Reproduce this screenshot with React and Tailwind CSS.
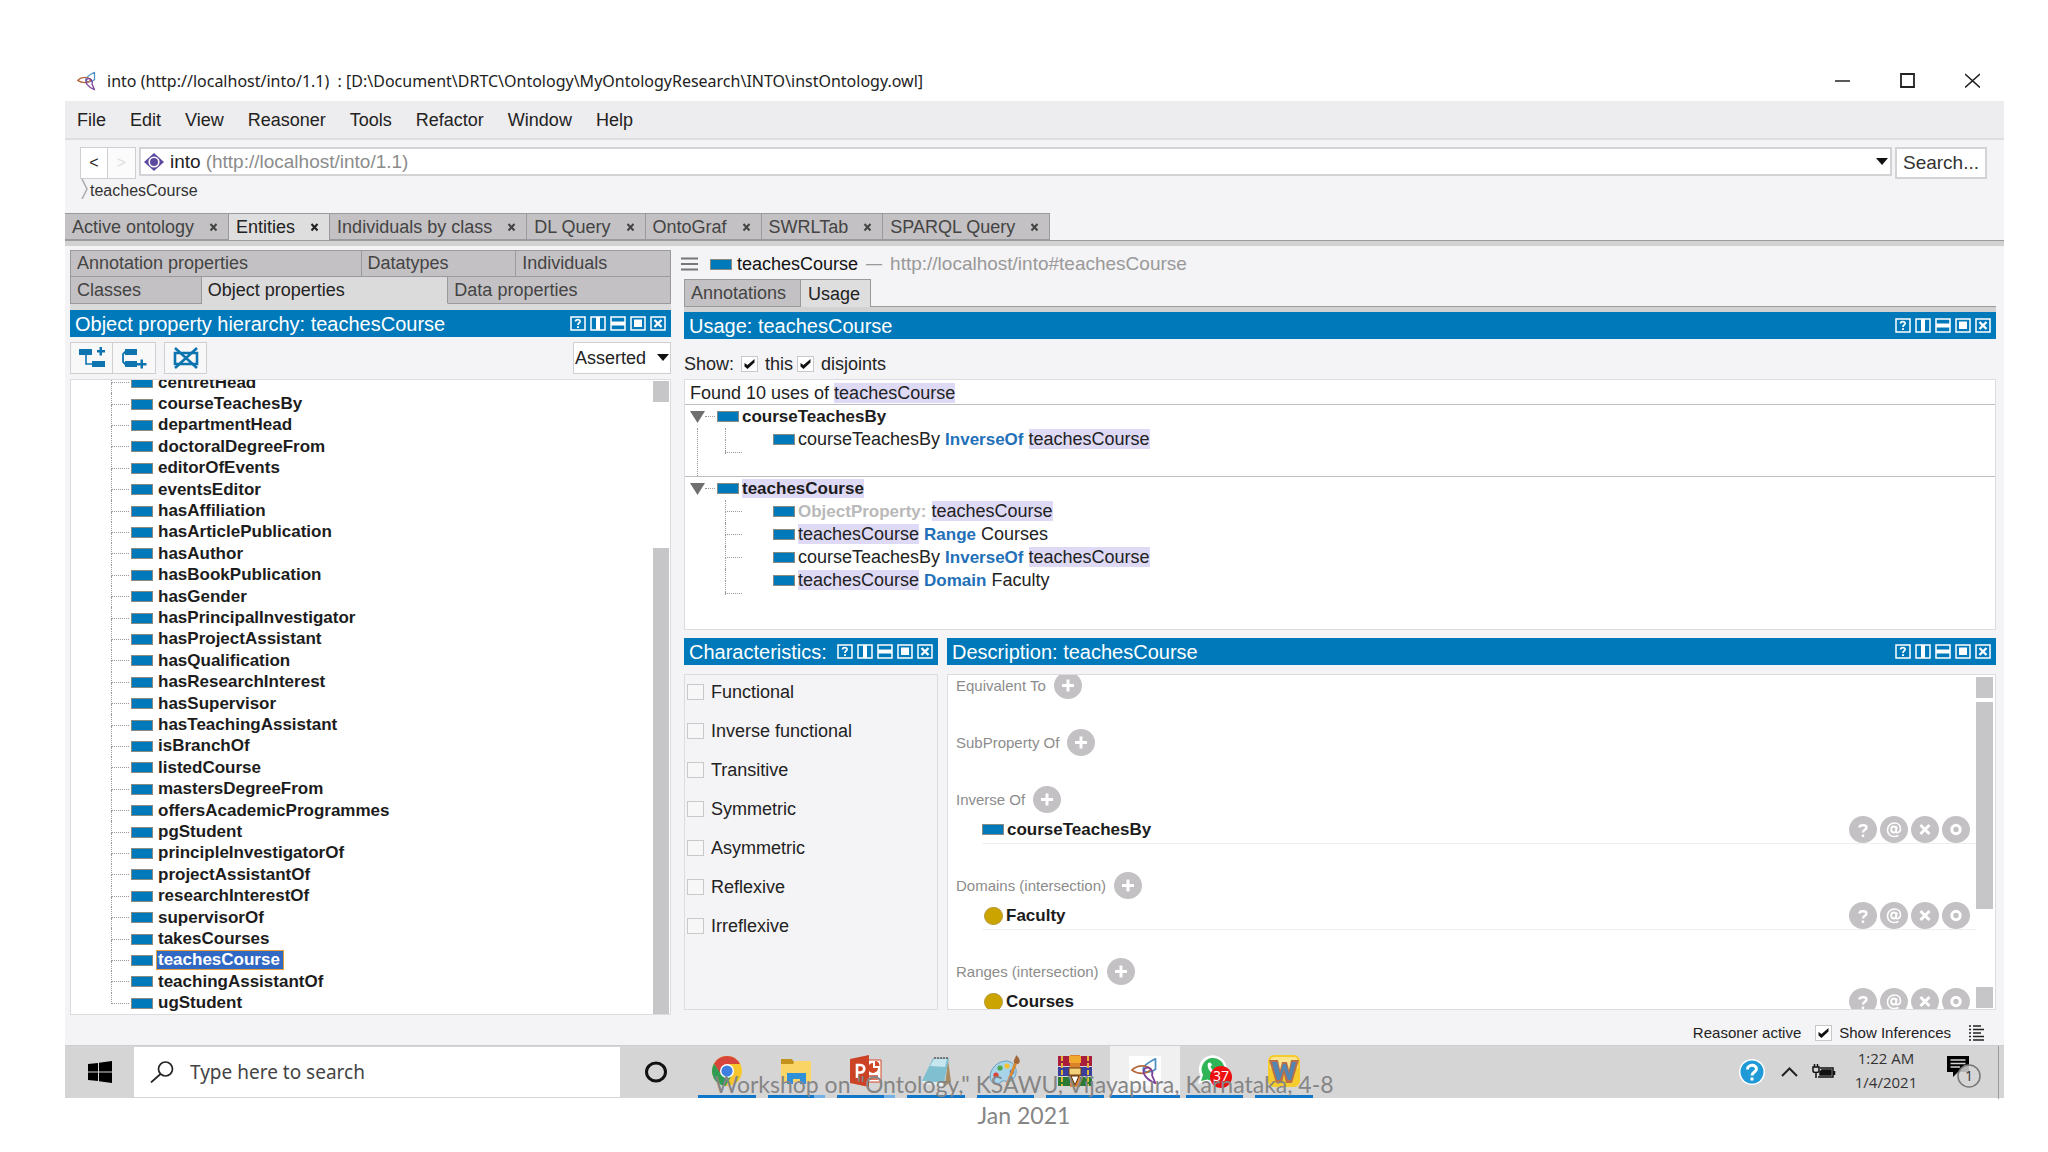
import { useState } from "react";

const menus = ["File", "Edit", "View", "Reasoner", "Tools", "Refactor", "Window", "Help"];

const mainTabs = [
  "Active ontology",
  "Entities",
  "Individuals by class",
  "DL Query",
  "OntoGraf",
  "SWRLTab",
  "SPARQL Query",
];

const properties = [
  "centretHead",
  "courseTeachesBy",
  "departmentHead",
  "doctoralDegreeFrom",
  "editorOfEvents",
  "eventsEditor",
  "hasAffiliation",
  "hasArticlePublication",
  "hasAuthor",
  "hasBookPublication",
  "hasGender",
  "hasPrincipalInvestigator",
  "hasProjectAssistant",
  "hasQualification",
  "hasResearchInterest",
  "hasSupervisor",
  "hasTeachingAssistant",
  "isBranchOf",
  "listedCourse",
  "mastersDegreeFrom",
  "offersAcademicProgrammes",
  "pgStudent",
  "principleInvestigatorOf",
  "projectAssistantOf",
  "researchInterestOf",
  "supervisorOf",
  "takesCourses",
  "teachesCourse",
  "teachingAssistantOf",
  "ugStudent",
];

const characteristics = [
  "Functional",
  "Inverse functional",
  "Transitive",
  "Symmetric",
  "Asymmetric",
  "Reflexive",
  "Irreflexive",
];

const descriptionSections = [
  { label: "Equivalent To" },
  { label: "SubProperty Of" },
  { label: "Inverse Of", item: "courseTeachesBy", kind: "property" },
  { label: "Domains (intersection)", item: "Faculty", kind: "class" },
  { label: "Ranges (intersection)", item: "Courses", kind: "class" },
];

function ProtegeLogo({ className }) {
  return (
    <svg viewBox="0 0 32 32" className={className} fill="none" strokeWidth="2" strokeLinejoin="round">
      <path d="M28 2C20 6 13 11 14 15C17 19 24 17 28 14Z" stroke="#4c8fc4" />
      <path d="M1 15C8 8 18 9 23 14C18 20 8 20 1 15Z" stroke="#b5683c" />
      <path d="M28 30C18 26 11 18 16 13C21 10 26 16 24 21Z" stroke="#7d3f9c" />
    </svg>
  );
}

function PropertyIcon() {
  return <span className="h-[11px] w-[22px] shrink-0 border border-[#8a8a80] bg-[#0079ba]" />;
}

function HeaderIcons() {
  return (
    <div className="flex shrink-0 gap-1 text-white">
      <button type="button" aria-label="Help">
        <svg viewBox="0 0 16 15" className="h-[15px] w-4" fill="none" stroke="currentColor">
          <path d="M1 1H15V14H1Z" strokeWidth="1.5" />
          <path d="M5.5 5.5C5.5 3 10.5 3 10 5.7C9.7 7 8 7 8 9" strokeWidth="1.8" />
          <path d="M7 10.3H9V12H7Z" fill="currentColor" stroke="none" />
        </svg>
      </button>
      <button type="button" aria-label="Split vertically">
        <svg viewBox="0 0 16 15" className="h-[15px] w-4" fill="none" stroke="currentColor">
          <path d="M1 1H15V14H1Z" strokeWidth="1.5" />
          <path d="M8 1V14" strokeWidth="4" />
        </svg>
      </button>
      <button type="button" aria-label="Split horizontally">
        <svg viewBox="0 0 16 15" className="h-[15px] w-4" fill="none" stroke="currentColor">
          <path d="M1 1H15V14H1Z" strokeWidth="1.5" />
          <path d="M1 7.5H15" strokeWidth="4" />
        </svg>
      </button>
      <button type="button" aria-label="Float">
        <svg viewBox="0 0 16 15" className="h-[15px] w-4" fill="none" stroke="currentColor">
          <path d="M1 1H15V14H1Z" strokeWidth="1.5" />
          <path d="M4 3.5H12V11H4Z" fill="currentColor" stroke="none" />
        </svg>
      </button>
      <button type="button" aria-label="Close view">
        <svg viewBox="0 0 16 15" className="h-[15px] w-4" fill="none" stroke="currentColor">
          <path d="M1 1H15V14H1Z" strokeWidth="1.5" />
          <path d="M4.5 4L11.5 11M11.5 4L4.5 11" strokeWidth="2.4" />
        </svg>
      </button>
    </div>
  );
}

function ViewHeader({ title }) {
  return (
    <div className="flex h-[27px] items-center justify-between bg-[#0079ba] pr-[5px] pl-[5px]">
      <h2 className="truncate text-xl leading-[26px] text-white">{title}</h2>
      <HeaderIcons />
    </div>
  );
}

function CheckBox({ id, label, defaultChecked, className }) {
  return (
    <label htmlFor={id} className={`flex items-center ${className}`}>
      <span className="relative flex">
        <input
          id={id}
          type="checkbox"
          defaultChecked={defaultChecked}
          className="peer h-4 w-[17px] appearance-none border border-[#c9c8ca] bg-[#f8f7f8] checked:bg-white"
        />
        <svg
          viewBox="0 0 17 16"
          className="pointer-events-none absolute inset-0 hidden h-4 w-[17px] peer-checked:block"
        >
          <path d="M3.500 7L6.500 9L13.500 3V6.500L6.500 13L3.500 10.500Z" fill="#111" />
        </svg>
      </span>
      {label}
    </label>
  );
}

function MainTabs() {
  return (
    <nav className="flex h-[27px]">
      {mainTabs.map((tab) => {
        const active = tab === "Entities";

        return (
          <div
            key={tab}
            className={`flex items-center gap-[13px] border-t border-r border-[#9a999b] pr-2 pl-[7px] ${
              active ? "bg-[#dfdedf] text-[#222]" : "border-b bg-[#c3c1c3] text-[#444]"
            }`}
          >
            <button type="button" className="text-lg leading-6">
              {tab}
            </button>
            <button type="button" aria-label={`Close ${tab}`} className="flex">
              <svg viewBox="0 0 13 12" className="h-3 w-[13px]" stroke="currentColor" strokeWidth="2">
                <path d="M3.500 3L9.500 9.500M9.500 3L3.500 9.500" />
              </svg>
            </button>
          </div>
        );
      })}
    </nav>
  );
}

function EntityTab({ children, active }) {
  return (
    <button
      type="button"
      className={`truncate border-r border-[#9a999b] pl-[6px] text-left text-lg leading-[25px] ${
        active ? "border-b border-b-[#dcdbdc] bg-[#dcdbdc] text-[#222]" : "border-b bg-[#c3c1c3] text-[#444]"
      }`}
    >
      {children}
    </button>
  );
}

function PropertyTree() {
  const [selected, setSelected] = useState("teachesCourse");

  return (
    <div className="mt-[5px] flex h-[636px] border border-[#dcdbdd] bg-white">
      <div className="flex flex-1 flex-col justify-end overflow-hidden">
        <ul className="grid h-[642px] shrink-0 auto-rows-fr">
          {properties.map((name, index) => (
            <li key={name} className="flex items-center">
              <span className="ml-10 flex w-[18px] flex-col self-stretch">
                <span className="flex-1 border-b border-l border-dotted border-[#999]" />
                <span
                  className={`flex-1 border-dotted border-[#999] ${
                    index < properties.length - 1 ? "border-l" : ""
                  }`}
                />
              </span>
              <span className="ml-[2px] flex">
                <PropertyIcon />
              </span>
              <button
                type="button"
                onClick={() => setSelected(name)}
                className={`ml-[3px] border px-px text-[17px] leading-[18px] font-bold ${
                  name === selected
                    ? "border-[#e2a03a] bg-[#3068c4] pr-[3px] text-white"
                    : "border-transparent text-[#1c1c1c]"
                }`}
              >
                {name}
              </button>
            </li>
          ))}
        </ul>
      </div>
      <div className="flex w-[17px] shrink-0 flex-col justify-between pt-px pr-px">
        <span className="h-[21px] bg-[#c6c5c7]" />
        <span className="h-[466px] bg-[#c6c5c7]" />
      </div>
    </div>
  );
}

function EntityPanel() {
  return (
    <section>
      <div className="grid h-[27px] grid-cols-[291fr_155fr_155fr] border-t border-l border-[#9a999b]">
        <EntityTab>Annotation properties</EntityTab>
        <EntityTab>Datatypes</EntityTab>
        <EntityTab>Individuals</EntityTab>
      </div>
      <div className="grid h-[27px] grid-cols-[131fr_247fr_223fr] border-l border-[#9a999b]">
        <EntityTab>Classes</EntityTab>
        <EntityTab active>Object properties</EntityTab>
        <EntityTab>Data properties</EntityTab>
      </div>
      <div className="h-[6px] bg-[#dcdbdc]" />
      <ViewHeader title="Object property hierarchy: teachesCourse" />
      <div className="mt-[5px] flex h-8">
        <button
          type="button"
          aria-label="Add sub property"
          className="flex w-[43px] items-center justify-center border border-[#cfced0] bg-[#f8f8f8]"
        >
          <svg viewBox="0 0 28 22" className="h-[22px] w-7" fill="#0d74b0">
            <path d="M1 2H14V8H1ZM14 14H27V20H14ZM19 3H21.500V0H24V3H27V5.500H24V8.500H21.500V5.500H19Z" />
            <path d="M8 8V17H14" fill="none" stroke="#0d74b0" strokeWidth="1.6" />
          </svg>
        </button>
        <button
          type="button"
          aria-label="Add sibling property"
          className="flex w-[43px] items-center justify-center border border-l-0 border-[#cfced0] bg-[#f8f8f8]"
        >
          <svg viewBox="0 0 28 22" className="h-[22px] w-7" fill="#0d74b0">
            <path d="M5 2H17V8H5ZM5 14H17V20H5ZM17 16H20.500V12.500H23V16H26.500V18.500H23V21.500H20.500V18.500H17Z" />
            <path d="M6 4L3 7V15L6 18" fill="none" stroke="#0d74b0" strokeWidth="1.8" />
          </svg>
        </button>
        <button
          type="button"
          aria-label="Delete property"
          className="ml-2 flex w-[43px] items-center justify-center border border-[#cfced0] bg-[#f8f8f8]"
        >
          <svg viewBox="0 0 28 24" className="h-6 w-7" fill="none" stroke="#0d74b0" strokeWidth="2.6">
            <path d="M3 7H25V18H3Z" />
            <path d="M3 2L25 22M25 2L3 22" />
          </svg>
        </button>
        <div className="relative ml-auto w-[98px]">
          <select
            aria-label="Hierarchy mode"
            className="h-8 w-full appearance-none border border-[#cfced0] bg-white pl-px text-lg leading-7 text-[#222]"
          >
            <option>Asserted</option>
            <option>Inferred</option>
          </select>
          <svg viewBox="0 0 12 7" className="pointer-events-none absolute top-3 right-[2px] h-[7px] w-3">
            <path d="M0 0H12L6 7Z" fill="#111" />
          </svg>
        </div>
      </div>
      <PropertyTree />
    </section>
  );
}

function Mark({ children }) {
  return <span className="bg-[#dedaf6]">{children}</span>;
}

function Keyword({ children }) {
  return <span className="text-[17px] font-bold text-[#2270b8]">{children}</span>;
}

function UsageHeading({ children }) {
  return (
    <div className="flex h-[23px] items-center pl-[5px]">
      <svg viewBox="0 0 15 12" className="h-3 w-[15px]">
        <path d="M0 0H15L7.500 12Z" fill="#6f6f6f" />
      </svg>
      <span className="mr-[2px] w-[10px] border-b border-dotted border-[#999]" />
      <PropertyIcon />
      <h3 className="ml-[3px] text-[17px] leading-[22px] font-bold text-[#1c1c1c]">{children}</h3>
    </div>
  );
}

function UsageRow({ children, branch = true }) {
  return (
    <li className="flex h-[23px] items-center">
      <span className="ml-10 flex w-[17px] flex-col self-stretch">
        <span className={`flex-1 border-l border-dotted border-[#999] ${branch ? "border-b" : ""}`} />
        <span className="flex-1 border-l border-dotted border-[#999]" />
      </span>
      <span className="ml-[31px] flex">
        <PropertyIcon />
      </span>
      <span className="ml-[3px] text-lg leading-[22px] text-[#222]">{children}</span>
    </li>
  );
}

function UsageEnd() {
  return <li className="ml-10 h-[2px] w-[17px] border-b border-l border-dotted border-[#999]" />;
}

function UsagePanel() {
  return (
    <>
      <ViewHeader title="Usage: teachesCourse" />
      <div className="flex h-10 items-center gap-1 pt-[10px] text-lg leading-6 text-[#222]">
        <span className="mr-[3px]">Show:</span>
        <CheckBox id="show-this" label="this" defaultChecked className="gap-[7px]" />
        <CheckBox id="show-disjoints" label="disjoints" defaultChecked className="gap-[7px]" />
      </div>
      <div className="h-[251px] border border-[#dcdbdd] bg-white">
        <p className="h-[25px] border-b border-[#bdbdbd] pt-px pl-[5px] text-lg leading-[25px] text-[#222]">
          Found 10 uses of <Mark>teachesCourse</Mark>
        </p>
        <div className="flex h-[72px] flex-col border-b border-[#bdbdbd]">
          <UsageHeading>courseTeachesBy</UsageHeading>
          <div className="flex flex-1">
            <span className="ml-3 border-l border-dotted border-[#999]" />
            <ul className="-ml-[13px]">
              <UsageRow branch={false}>
                courseTeachesBy <Keyword>InverseOf</Keyword> <Mark>teachesCourse</Mark>
              </UsageRow>
              <UsageEnd />
            </ul>
          </div>
        </div>
        <UsageHeading>
          <Mark>teachesCourse</Mark>
        </UsageHeading>
        <ul>
          <UsageRow>
            <span className="text-[17px] font-bold text-[#b9b9b9]">ObjectProperty:</span> <Mark>teachesCourse</Mark>
          </UsageRow>
          <UsageRow>
            <Mark>teachesCourse</Mark> <Keyword>Range</Keyword> Courses
          </UsageRow>
          <UsageRow>
            courseTeachesBy <Keyword>InverseOf</Keyword> <Mark>teachesCourse</Mark>
          </UsageRow>
          <UsageRow branch={false}>
            <Mark>teachesCourse</Mark> <Keyword>Domain</Keyword> Faculty
          </UsageRow>
          <UsageEnd />
        </ul>
      </div>
    </>
  );
}

function CircleButton({ label, children }) {
  return (
    <button type="button" aria-label={label} className="shrink-0">
      <svg viewBox="0 0 28 27" className="h-[27px] w-7" fill="none" stroke="#fff" strokeWidth="3">
        <ellipse cx="14" cy="13.500" rx="14" ry="13.500" fill="#c3c1c3" stroke="none" />
        {children}
      </svg>
    </button>
  );
}

function AxiomActions() {
  return (
    <div className="mr-[6px] ml-auto flex gap-[3px]">
      <CircleButton label="Explain">
        <path d="M10.500 11.500C10.500 8.500 17.500 8.500 17.500 11.500C17.500 14 14 13.500 14 16.500M14 18.500V21" strokeWidth="2.400" />
      </CircleButton>
      <CircleButton label="Annotate">
        <path d="M17 10.500L15.800 15.500C15.500 17.500 20.500 17 20.500 13C20.500 9.500 18 7 14.500 7C10.500 7 7.500 10 7.500 14C7.500 18 10.500 20.500 14 20.500C16 20.500 17.500 20 18.500 19.500" strokeWidth="1.600" />
        <ellipse cx="13.800" cy="13.500" rx="2.600" ry="3" strokeWidth="1.800" />
      </CircleButton>
      <CircleButton label="Remove">
        <path d="M9.500 9L18.500 18M18.500 9L9.500 18" />
      </CircleButton>
      <CircleButton label="Edit">
        <circle cx="14" cy="13.500" r="4.200" />
      </CircleButton>
    </div>
  );
}

function DescriptionPanel() {
  return (
    <section>
      <ViewHeader title="Description: teachesCourse" />
      <div className="mt-[9px] flex h-[336px] overflow-hidden border border-[#dcdbdd] bg-white">
        <div className="flex-1">
          <div className="-mt-[3px]">
            {descriptionSections.map((section) => (
              <div key={section.label} className={section.item ? "h-[86px]" : "h-[57px]"}>
                <div className="flex h-[27px] items-center gap-2 pl-2">
                  <h3 className="text-[15px] leading-5 text-[#8c8c8c]">{section.label}</h3>
                  <CircleButton label={`Add ${section.label}`}>
                    <path d="M14 7.500V19.500M8 13.500H20" />
                  </CircleButton>
                </div>
                {section.item && (
                  <div className="mt-[3px] ml-[34px] flex h-7 items-center border-b border-[#efefef]">
                    {section.kind === "property" ? (
                      <PropertyIcon />
                    ) : (
                      <span className="ml-[2px] h-[18px] w-[19px] rounded-full border border-[#b79a3c] bg-[#cca400]" />
                    )}
                    <span className="ml-[3px] text-[17px] leading-[22px] font-bold text-[#1c1c1c]">
                      {section.item}
                    </span>
                    <AxiomActions />
                  </div>
                )}
              </div>
            ))}
          </div>
        </div>
        <div className="flex w-[19px] shrink-0 flex-col pt-[2px] pr-[2px] pb-px">
          <span className="h-[21px] bg-[#c6c5c7]" />
          <span className="mt-1 h-[207px] bg-[#c6c5c7]" />
          <span className="mt-auto h-[21px] bg-[#c6c5c7]" />
        </div>
      </div>
    </section>
  );
}

function DetailPanel() {
  return (
    <section>
      <div className="flex h-7 items-center">
        <button type="button" aria-label="Menu" className="-ml-[3px]">
          <svg viewBox="0 0 17 14" className="h-[14px] w-[17px]" stroke="#777" strokeWidth="2">
            <path d="M0 1.500H17M0 7H17M0 12.500H17" />
          </svg>
        </button>
        <span className="ml-3 flex">
          <PropertyIcon />
        </span>
        <h1 className="ml-[5px] text-lg leading-6 text-[#111]">teachesCourse</h1>
        <span className="mx-2 text-base text-[#999]">—</span>
        <a href="#teachesCourse" className="text-[19px] leading-6 text-[#999]">
          http://localhost/into#teachesCourse
        </a>
      </div>
      <nav className="mt-px flex h-7 border-b border-[#9a999b]">
        <button
          type="button"
          className="w-[117px] border border-b-0 border-[#9a999b] bg-[#c3c1c3] pl-[6px] text-left text-lg leading-[26px] text-[#444]"
        >
          Annotations
        </button>
        <button
          type="button"
          className="-mb-px w-[70px] border-t border-r border-[#9a999b] bg-[#dfdedf] pl-[7px] text-left text-lg leading-[26px] text-[#222]"
        >
          Usage
        </button>
      </nav>
      <div className="h-[5px] bg-[#d3d2d3]" />
      <UsagePanel />
      <div className="mt-2 grid grid-cols-[254fr_1049fr] gap-[9px]">
        <section className="min-w-0">
          <ViewHeader title="Characteristics:" />
          <div className="mt-[9px] flex h-[336px] flex-col gap-[5px] border border-[#dcdbdd] pl-[2px]">
            {characteristics.map((name) => (
              <CheckBox
                key={name}
                id={name}
                label={name}
                className="h-[34px] gap-[7px] text-lg leading-6 text-[#222]"
              />
            ))}
          </div>
        </section>
        <DescriptionPanel />
      </div>
    </section>
  );
}

function ChromeIcon() {
  return (
    <svg viewBox="0 0 32 32" className="h-8 w-8">
      <circle cx="16" cy="16" r="15" fill="#f7c52c" />
      <path d="M16 1A15 15 0 0 0 3 8.500L10 20L16 9H29A15 15 0 0 0 16 1Z" fill="#d8453a" />
      <path d="M3 8.500A15 15 0 0 0 14.500 31L21 20L10.500 20Z" fill="#2f9e52" />
      <circle cx="16" cy="16" r="7" fill="#fff" />
      <circle cx="16" cy="16" r="5.600" fill="#3f7fe0" />
    </svg>
  );
}

function ExplorerIcon() {
  return (
    <svg viewBox="0 0 32 32" className="h-8 w-8">
      <path d="M1 4H12L14 7H29V12H1Z" fill="#c2921d" />
      <path d="M1 9H13L15 6H31V27H1Z" fill="#fbd466" />
      <path d="M7 29V18H26V29H20V24H13V29Z" fill="#2f8fd8" />
    </svg>
  );
}

function PowerPointIcon() {
  return (
    <svg viewBox="0 0 32 32" className="h-8 w-8">
      <path d="M16 5H31V27H16Z" fill="#fff" stroke="#d24726" />
      <path d="M23 8A5 5 0 1 0 28 13H23Z" fill="#d24726" />
      <path d="M25 6V11H29.500C29.500 8 28 6 25 6Z" fill="#d24726" />
      <path d="M19 21H28M19 24H28" stroke="#d24726" strokeWidth="1.500" />
      <path d="M0 4L19 0V32L0 28Z" fill="#cc4224" />
      <path d="M7 23V10H10.500C15.500 10 15.500 17.500 10.500 17.500H7" fill="none" stroke="#fff" strokeWidth="2.600" />
    </svg>
  );
}

function NotepadIcon() {
  return (
    <svg viewBox="0 0 32 32" className="h-8 w-8">
      <path d="M28 4L31 27L25 31Z" fill="#a98b5f" />
      <path d="M13 3H29L24 28L2 26Z" fill="#7fbfd0" />
      <path d="M14 4H27L25 12L10 11Z" fill="#c6e6ee" />
      <path d="M14 3H29" stroke="#777" strokeWidth="2" strokeDasharray="2 1" />
      <path d="M2 26L24 28L22 31L4 29Z" fill="#e9f4f6" />
    </svg>
  );
}

function PaintIcon() {
  return (
    <svg viewBox="0 0 32 32" className="h-8 w-8">
      <path d="M18 6C8 6 1 14 1 22C1 29 9 31 12 27C15 24 17 28 22 26C29 22 30 8 18 6Z" fill="#a8d4ea" stroke="#6a9fbe" />
      <circle cx="7" cy="20" r="2.600" fill="#d94436" />
      <circle cx="11" cy="13" r="2.600" fill="#4fa64b" />
      <circle cx="18" cy="11" r="2.600" fill="#f1c232" />
      <circle cx="23" cy="17" r="2.400" fill="#4a79c9" />
      <path d="M27 7L18 30" stroke="#d98a32" strokeWidth="3" />
      <path d="M25 8C24 4 27 3 27 0C31 3 32 7 29 9Z" fill="#a2683a" />
    </svg>
  );
}

function WinRarIcon() {
  return (
    <svg viewBox="0 0 34 32" className="h-8 w-[34px]">
      <path d="M0 1H34V11H0Z" fill="#a91e3c" />
      <path d="M0 12H34V21H0Z" fill="#3a3f9c" />
      <path d="M0 22H34V31H0Z" fill="#2b7a34" />
      <path d="M4 1V31M30 1V31" stroke="#e0b53b" strokeWidth="2" strokeDasharray="5 2" />
      <path d="M12 0H22V32H12Z" fill="#d9822b" />
      <path d="M11 1H23V8H11Z" fill="#f0a92c" />
      <path d="M11 13H23V20H11Z" fill="#f4d27a" stroke="#6e3d12" />
      <path d="M13 21H21L17 30Z" fill="#fff" stroke="#5a2d0c" />
    </svg>
  );
}

function WhatsAppIcon() {
  return (
    <svg viewBox="0 0 36 36" className="h-9 w-9">
      <path d="M2 31L4.500 23A14 14 0 1 1 10 28.500Z" fill="#fff" />
      <path d="M5 28L7 22A11.500 11.500 0 1 1 11.500 26.500Z" fill="#2fb457" />
      <path d="M12 10C10 16 17 23 22 21L23 18L20 16.500L18.500 18C16 17 15 15 14.500 13.500L16 12L14.500 9.500Z" fill="#fff" />
      <circle cx="25" cy="24" r="11" fill="#ee1111" />
      <text x="25" y="28" textAnchor="middle" fontSize="14" fill="#fff">
        37
      </text>
    </svg>
  );
}

function WordWebIcon() {
  return (
    <svg viewBox="0 0 34 34" className="h-[34px] w-[34px]">
      <rect x="1" y="1" width="32" height="32" rx="6" fill="#f6cb2e" />
      <path d="M3 8C3 4 5 3 8 3H26C30 3 31 5 31 8V14C22 17 12 17 3 14Z" fill="#fbe58d" />
      <path d="M2 6H11L13 16L15 8H20L22 16L24 6H32L25 29H19L17 20L15 29H9Z" fill="#b9704a" />
      <path d="M5 8H10L13 20L16 10H19L22 20L25 8H29L24 26H21L17 15L13 26H10Z" fill="#4f86b5" />
    </svg>
  );
}

const taskbarApps = [
  { name: "Chrome", icon: <ChromeIcon /> },
  { name: "File Explorer", icon: <ExplorerIcon />, stacked: true },
  { name: "PowerPoint", icon: <PowerPointIcon />, stacked: true },
  { name: "Notepad", icon: <NotepadIcon /> },
  { name: "Paint", icon: <PaintIcon /> },
  { name: "WinRAR", icon: <WinRarIcon /> },
  { name: "Protege", icon: <ProtegeLogo className="h-[30px] w-8 bg-white p-px" />, active: true },
  { name: "WhatsApp", icon: <WhatsAppIcon /> },
  { name: "WordWeb", icon: <WordWebIcon /> },
];

function Taskbar() {
  return (
    <footer className="flex h-[53px] border-t border-[#cfcecf] bg-[#d6d5d6] font-['Open_Sans',sans-serif]">
      <button type="button" aria-label="Start" className="flex w-[69px] items-center justify-center">
        <svg viewBox="0 0 24 22" className="h-[22px] w-6" fill="#000">
          <path d="M0 3L10 2V10.500H0ZM11 1.800L24 0V10.500H11ZM0 11.500H10V20L0 19ZM11 11.500H24V22L11 20.200Z" />
        </svg>
      </button>
      <div className="my-px flex w-[486px] items-center bg-white">
        <svg viewBox="0 0 24 22" className="ml-4 h-[22px] w-6" fill="none" stroke="#222" strokeWidth="1.700">
          <circle cx="15.500" cy="8" r="7" />
          <path d="M10.500 13L1 21.500" />
        </svg>
        <input
          aria-label="Search"
          placeholder="Type here to search"
          className="ml-4 w-72 font-['Noto_Sans',sans-serif] text-[19px] leading-7 outline-none placeholder:text-[#444]"
        />
      </div>
      <button type="button" aria-label="Cortana" className="flex w-[72px] items-center justify-center">
        <svg viewBox="0 0 24 22" className="h-[22px] w-6" fill="none" stroke="#111" strokeWidth="3">
          <ellipse cx="12" cy="11" rx="9.500" ry="9" />
        </svg>
      </button>
      <div className="grid w-[627px] grid-cols-9">
        {taskbarApps.map((app) => (
          <button
            key={app.name}
            type="button"
            aria-label={app.name}
            className={`flex flex-col items-center ${app.active ? "bg-[#f1f0f1]" : "px-[6px]"}`}
          >
            <span className="flex flex-1 items-center">{app.icon}</span>
            <span className="flex h-[3px] w-full bg-[#0f76c9]">
              {app.stacked && <span className="ml-auto w-[11px] bg-[#72b0e6]" />}
            </span>
          </button>
        ))}
      </div>
      <div className="ml-auto flex items-center text-[#333]">
        <svg viewBox="0 0 26 26" className="h-[26px] w-[26px]">
          <circle cx="13" cy="13" r="13" fill="#fff" />
          <circle cx="13" cy="13" r="11.500" fill="#1f9ad6" />
          <path d="M8.500 10.500C8.500 5 17.500 5 17.500 10C17.500 13 13 13 13 16.500M13 18.500V21.500" fill="none" stroke="#fff" strokeWidth="3" />
        </svg>
        <svg viewBox="0 0 17 10" className="ml-4 h-[10px] w-[17px]" fill="none" stroke="#222" strokeWidth="2">
          <path d="M1 9L8.500 1.500L16 9" />
        </svg>
        <svg viewBox="0 0 24 16" className="ml-[14px] h-4 w-6" fill="none" stroke="#111" strokeWidth="1.500">
          <path d="M8 4H21V13H6M22.500 7V11" />
          <path d="M10 6H19V11H8V8Z" fill="#111" />
          <path d="M1 3H7V7C7 9 1 9 1 7ZM2.500 0V3M5.500 0V3M4 9V14" />
        </svg>
        <time className="-mt-1 ml-[14px] w-[72px] text-center text-[15px] leading-6">
          <span className="block">1:22 AM</span>
          <span className="block">1/4/2021</span>
        </time>
        <button type="button" aria-label="Notifications" className="relative ml-6">
          <svg viewBox="0 0 36 34" className="h-[34px] w-9">
            <path d="M1 1H23V17H12L7 22V17H1Z" fill="#000" />
            <path d="M4.500 5H19.500M4.500 8.500H19.500M4.500 12H14" stroke="#d6d5d6" strokeWidth="1.400" />
            <circle cx="23" cy="21" r="11" fill="#d6d5d6" fillOpacity="0.85" stroke="#777" strokeWidth="1.500" />
          </svg>
          <span className="absolute top-[11px] left-[19px] text-sm leading-5">1</span>
        </button>
        <span className="mr-[5px] ml-4 h-[53px] w-px bg-[#9a999b]" />
      </div>
    </footer>
  );
}

export default function App() {
  return (
    <main className="relative min-h-screen bg-white pt-[60px] pr-11 pl-[65px] font-['Liberation_Sans',Arial,sans-serif]">
      <div className="bg-[#f4f3f5]">
        <header className="flex h-[41px] items-center bg-white pl-3">
          <ProtegeLogo className="h-5 w-5" />
          <p className="ml-[10px] font-['Noto_Sans',sans-serif] text-base leading-6 whitespace-pre text-[#222]">
            {"into (http://localhost/into/1.1)  : [D:\\Document\\DRTC\\Ontology\\MyOntologyResearch\\INTO\\instOntology.owl]"}
          </p>
          <div className="mr-6 ml-auto flex gap-[50px] text-[#222]">
            <button type="button" aria-label="Minimize">
              <svg viewBox="0 0 15 15" className="h-[15px] w-[15px]" stroke="currentColor" strokeWidth="1.500">
                <path d="M0 8H15" />
              </svg>
            </button>
            <button type="button" aria-label="Maximize">
              <svg viewBox="0 0 15 15" className="h-[15px] w-[15px]" fill="none" stroke="currentColor" strokeWidth="1.800">
                <path d="M1 1H14V14H1Z" />
              </svg>
            </button>
            <button type="button" aria-label="Close">
              <svg viewBox="0 0 15 15" className="h-[15px] w-[15px]" stroke="currentColor" strokeWidth="1.600">
                <path d="M0 1L15 14.500M15 1L0 14.500" />
              </svg>
            </button>
          </div>
        </header>

        <nav className="flex h-[39px] items-center gap-6 border-b-2 border-[#dddcde] bg-[#edecee] pt-px pl-3">
          {menus.map((menu) => (
            <button key={menu} type="button" className="text-lg leading-6 text-[#222]">
              {menu}
            </button>
          ))}
        </nav>

        <div className="flex items-start pt-[7px] pr-[17px] pl-[15px]">
          <button type="button" className="h-8 w-7 border border-[#cfced0] bg-white text-base text-[#222]">
            &lt;
          </button>
          <button type="button" disabled className="h-8 w-7 border border-l-0 border-[#cfced0] bg-[#fbfbfb] text-base text-[#ddd]">
            &gt;
          </button>
          <button
            type="button"
            className="ml-[3px] flex h-[29px] flex-1 items-center border-2 border-[#d3d2d4] bg-white pr-[2px] pl-[3px] text-left text-[19px] leading-6"
          >
            <svg viewBox="0 0 20 18" className="h-[18px] w-5">
              <path d="M10 0L20 9L10 18L0 9Z" fill="#5d49a0" />
              <circle cx="10" cy="9" r="4.800" fill="none" stroke="#fff" strokeWidth="1.600" />
            </svg>
            <span className="ml-[6px] text-[#222]">into</span>
            <span className="ml-[5px] text-[#8c8c8c]">(http://localhost/into/1.1)</span>
            <svg viewBox="0 0 12 7" className="ml-auto h-[7px] w-3">
              <path d="M0 0H12L6 7Z" fill="#111" />
            </svg>
          </button>
          <button type="button" className="ml-[3px] h-8 w-[92px] border-2 border-[#d3d2d4] bg-white text-[19px] text-[#333]">
            Search...
          </button>
        </div>

        <div className="flex h-[34px] items-start pl-4 text-[#333]">
          <svg viewBox="0 0 8 20" className="h-5 w-2" fill="none" stroke="#aaa" strokeWidth="1.500">
            <path d="M1 0L6 10L1 20" />
          </svg>
          <span className="ml-px text-base leading-6">teachesCourse</span>
        </div>

        <MainTabs />
        <div className="h-[6px] border-t border-[#9a999b] bg-[#d3d2d3]" />

        <div className="grid grid-cols-[601fr_1312fr] gap-[13px] pt-1 pr-2 pl-[5px]">
          <EntityPanel />
          <DetailPanel />
        </div>

        <div className="flex h-[30px] items-center justify-end pt-[5px] pr-5 text-[15px] leading-5 text-[#222]">
          <span className="mr-[14px]">Reasoner active</span>
          <CheckBox id="show-inferences" label="Show Inferences" defaultChecked className="gap-[7px]" />
          <svg viewBox="0 0 15 16" className="ml-[18px] h-4 w-[15px]" stroke="#222" strokeWidth="1.400">
            <path d="M0 1H2M0 4.500H2M0 8H2M0 11.500H2M0 15H2M4 1H12M4 4.500H15M4 8H12M4 11.500H15M4 15H15" />
          </svg>
        </div>
        <Taskbar />
      </div>

      {/* slide caption, lies over the taskbar */}
      <p className="pointer-events-none absolute top-[1069px] right-0 left-0 mx-auto w-[640px] text-center font-['Lato',sans-serif] text-[23px] leading-[31px] text-[#858585]">
        Workshop on "Ontology," KSAWU, Vijayapura, Karnataka, 4-8 Jan 2021
      </p>
    </main>
  );
}
